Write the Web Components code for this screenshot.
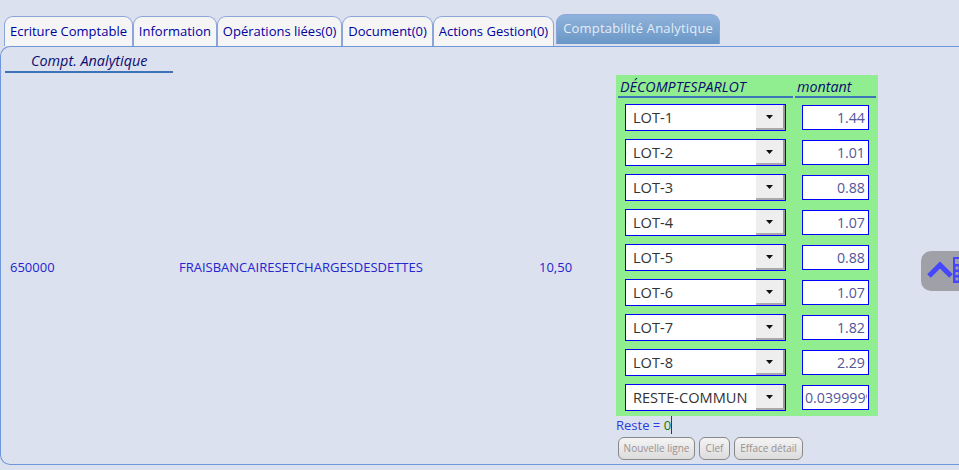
<!DOCTYPE html>
<html lang="fr"><head><meta charset="utf-8"><title>Comptabilité Analytique</title>
<style>
html,body{margin:0;padding:0;height:470px;overflow:hidden;background:#dce1ef;font:13px "Open Sans",sans-serif}
</style></head><body>
<app-tabs>
  <tab-item>Ecriture Comptable</tab-item><tab-item>Information</tab-item><tab-item>Opérations liées(0)</tab-item><tab-item>Document(0)</tab-item><tab-item>Actions Gestion(0)</tab-item><tab-item active>Comptabilité Analytique</tab-item>
</app-tabs>
<app-panel>
  <span slot="head">Compt. Analytique</span>
  <span slot="code">650000</span>
  <span slot="label">FRAISBANCAIRESETCHARGESDESDETTES</span>
  <span slot="amount">10,50</span>
  <lot-table slot="table">
    <lot-row name="LOT-1" value="1.44"></lot-row>
    <lot-row name="LOT-2" value="1.01"></lot-row>
    <lot-row name="LOT-3" value="0.88"></lot-row>
    <lot-row name="LOT-4" value="1.07"></lot-row>
    <lot-row name="LOT-5" value="0.88"></lot-row>
    <lot-row name="LOT-6" value="1.07"></lot-row>
    <lot-row name="LOT-7" value="1.82"></lot-row>
    <lot-row name="LOT-8" value="2.29"></lot-row>
    <lot-row name="RESTE-COMMUN" value="0.03999999"></lot-row>
  </lot-table>
  <reste-line slot="reste"></reste-line>
  <grey-btn slot="btn" style="width:77px">Nouvelle ligne</grey-btn>
  <grey-btn slot="btn" style="width:31px">Clef</grey-btn>
  <grey-btn slot="btn" style="width:69px">Efface détail</grey-btn>
</app-panel>
<float-nav></float-nav>
<script>
function def(name,css,html,init){
  customElements.define(name,class extends HTMLElement{
    constructor(){super();const r=this.attachShadow({mode:'open'});
      r.innerHTML='<style>'+css+'</style>'+html;}
    connectedCallback(){if(init)init(this,this.shadowRoot);}
  });
}
def('app-tabs',':host{display:flex;align-items:flex-start;height:30px;padding:16px 0 0 4px;gap:0}','<slot></slot>');
def('tab-item',`:host{display:block;box-sizing:border-box;height:30px;padding:5px 4.95px 0 4.95px;
  border:1px solid #8ba4da;border-bottom:none;border-radius:9px 9px 0 0;background:#f5f5f5;color:#0000a0;font-size:13px;line-height:18px;white-space:nowrap}
  :host([active]){margin:-2px 0 0 2px;padding:4px 5.5px 0 6px;height:30px;color:#e4ecf6;background:linear-gradient(#8fb2da,#6a97c6);letter-spacing:.2px}`,'<slot></slot>');
def('app-panel',`:host{display:block;box-sizing:border-box;height:419px;border:1px solid #6f96d8;border-right:none;border-radius:10px 0 0 10px;color:#2424d0;font-size:13px}
  .wrap{display:grid;grid-template-columns:168px 1fr;grid-template-rows:26px auto;height:100%;padding:0 0 0 4px;box-sizing:border-box}
  .head{grid-column:1;box-sizing:border-box;height:26px;padding:4px 0 0 26px;border-bottom:2px solid #3f73b8;font:italic 14.4px/20px "Open Sans",sans-serif;color:#0b0b6e;white-space:nowrap}
  .row{display:flex;margin-top:2px;grid-column:1/3;grid-row:2;align-self:start}
  .cell{align-self:center;line-height:18px;white-space:nowrap;padding-bottom:2px}
  .code{width:169px;padding-left:5px;box-sizing:border-box}
  .label{width:365px;padding-left:5px;box-sizing:border-box}
  .amount{width:77px;box-sizing:border-box}
  .side{display:flex;flex-direction:column}
  .btns{display:flex;gap:4px;padding:2px 0 0 2px}`,
  `<div class="wrap"><div class="head"><slot name="head"></slot></div>
  <div class="row"><div class="cell code"><slot name="code"></slot></div><div class="cell label"><slot name="label"></slot></div><div class="cell amount"><slot name="amount"></slot></div>
  <div class="side"><slot name="table"></slot><slot name="reste"></slot><div class="btns"><slot name="btn"></slot></div></div></div></div>`);
def('lot-table',`:host{display:block;box-sizing:border-box;width:262px;height:341px;background:#90ee90;padding:2px 2px 0 2px}
  .h{display:grid;grid-template-columns:175px 81px;gap:2px;font:italic 14.3px/19px "Open Sans",sans-serif;color:#0b0b6e;white-space:nowrap}
  .h div{box-sizing:border-box;height:21px;border-bottom:2px solid #3f73b8;padding-left:2px}
  .b{padding-top:6px}`,
  `<div class="h"><div>DÉCOMPTESPARLOT</div><div>montant</div></div><div class="b"><slot></slot></div>`);
def('lot-row',`:host{display:flex;height:35px;padding-left:7px;box-sizing:border-box}
  .sel{box-sizing:border-box;width:161px;height:27px;border:1px solid #0000ff;display:flex;background:#fff}
  .t{flex:1;padding-left:7px;font:14.6px/25px "Open Sans",sans-serif;color:#333;white-space:nowrap;overflow:hidden}
  .a{box-sizing:border-box;width:29px;height:25px;background:#eee;border-right:2px solid #999;border-bottom:2px solid #aaa;display:flex;align-items:center;justify-content:center}
  .a svg{display:block}
  .v{box-sizing:border-box;width:67px;height:25px;margin:1px 0 0 16px;border:1px solid #0000ff;background:#fff;font:14.2px/23px "Open Sans",sans-serif;color:#55559a;text-align:right;padding:0 3px 0 2px;overflow:clip;overflow-clip-margin:content-box;white-space:nowrap}`,
  `<div class="sel"><div class="t"></div><div class="a"><svg width="7" height="4" viewBox="0 0 7 4"><path d="M0 0h7L3.5 4z" fill="#111"/></svg></div></div><div class="v"></div>`,
  (h,r)=>{r.querySelector('.t').textContent=h.getAttribute('name');const v=r.querySelector('.v');v.textContent=h.getAttribute('value');
    if(h.getAttribute('name').length>6){v.style.textAlign='left';v.style.paddingRight='1px';}});
def('reste-line',`:host{display:block;height:19px;font:13px/19px "Open Sans",sans-serif;color:#2a3ce0}
  b{font-weight:400;color:#0b7a0b;border-right:1px solid #0b5a0b}`,`Reste = <b>0</b>`);
def('grey-btn',`:host{display:block;box-sizing:border-box;height:23px;border:1px solid #888;border-radius:6px;background:linear-gradient(#f4f4f4,#dcdcdc);color:#9a9090;font:10px/21px "Open Sans",sans-serif;white-space:nowrap;text-align:center}`,'<slot></slot>');
def('float-nav',`:host{position:absolute;left:921px;top:251px;width:38px;height:40px;background:#a0a0a8;border-radius:10px 0 0 10px;overflow:hidden}
  svg{display:block}`,
  `<svg width="38" height="40" viewBox="0 0 38 40"><path d="M8 25L19 14l11 11" fill="none" stroke="#4646ff" stroke-width="5"/><path d="M32 6h6v26h-6z" fill="#4646ff"/><path d="M34 8h4v5h-4z" fill="#a0a0a8"/><path d="M34.500 15.500h3v3h-3zM34.500 21h3v3h-3zM34.500 26.500h3v3h-3z" fill="#a0a0a8"/></svg>`);
</script>
</body></html>
